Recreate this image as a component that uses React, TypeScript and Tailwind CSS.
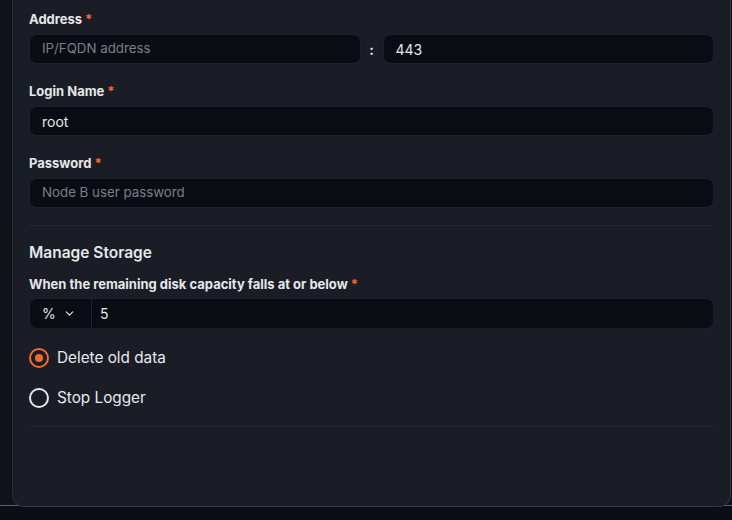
import React, { useState } from "react"
import { ChevronDown } from "lucide-react"

const font = { fontFamily: "Inter, 'Noto Sans', sans-serif" }

function Label({ text, required = true }: { text: string; required?: boolean }) {
    return (
        <div className="text-[13px] leading-[20px] font-bold text-[#e6e7ea]">
            {text}
            {required && <span className="ml-[3px] text-[#f26a2e]">*</span>}
        </div>
    )
}

function Input({ value, placeholder }: { value?: string; placeholder?: string }) {
    return (
        <div className="h-[30px] flex items-center px-3 rounded-lg bg-[#090c13] border border-[#1c2130]">
            {value ? <span className="text-[14px] text-[#e6e7ea]">{value}</span> : <span className="text-[13.3px] text-[#7b7f88]">{placeholder}</span>}
        </div>
    )
}

function Radio({ checked, label, onClick }: { checked: boolean; label: string; onClick: () => void }) {
    return (
        <button onClick={onClick} className="flex items-center gap-2 h-6 text-left">
            <span className={`w-5 h-5 rounded-full border-2 flex items-center justify-center ${checked ? "border-[#f26a2e]" : "border-[#e6e7ea]"}`}>
                {checked && <span className="w-2 h-2 rounded-full bg-[#f26a2e]" />}
            </span>
            <span className="text-[15.3px] text-[#e8e9ec]">{label}</span>
        </button>
    )
}

export default function App() {
    const [mode, setMode] = useState("delete")
    return (
        <div style={font} className="relative w-[732px] h-[520px] bg-[#0b0d12] overflow-hidden">
            <div className="absolute left-0 top-0 w-full h-[506px] bg-[#0f1218]" />
            <div className="absolute left-0 top-[505px] w-full h-px bg-[#5b6070]" />
            <div className="relative z-10 ml-[12px] w-[719px] h-[507px] bg-[#1a1d25] border-l border-r border-b border-l-[#272d45] border-r-[#3d2f3c] border-b-[#2d3550] rounded-b-xl px-4 pt-[9px]">
                <Label text="Address" />
                <div className="mt-[5px] flex items-center">
                    <div className="flex-1"><Input placeholder="IP/FQDN address" /></div>
                    <span className="w-[22px] text-center text-[14px] font-bold text-[#e6e7ea]">:</span>
                    <div className="flex-1"><Input value="443" /></div>
                </div>

                <div className="mt-[17px]"><Label text="Login Name" /></div>
                <div className="mt-[5px]"><Input value="root" /></div>

                <div className="mt-[17px]"><Label text="Password" /></div>
                <div className="mt-[5px]"><Input placeholder="Node B user password" /></div>

                <div className="mt-[17px] h-px bg-[#252a38]" />

                <h3 className="mt-[15px] text-[15.5px] leading-[24px] font-semibold text-[#e6e7ea]">Manage Storage</h3>
                <div className="mt-[9px]"><Label text="When the remaining disk capacity falls at or below" /></div>
                <div className="mt-[4px] h-[31px] flex rounded-lg bg-[#090c13] border border-[#1c2130] text-[14px] text-[#e6e7ea]">
                    <div className="w-[62px] flex items-center pl-3 gap-[7px] border-r border-[#1f2434]">
                        <span>%</span>
                        <ChevronDown size={13} strokeWidth={2} />
                    </div>
                    <div className="flex items-center pl-2">5</div>
                </div>

                <div className="mt-[17px] flex flex-col gap-[16px]">
                    <Radio checked={mode === "delete"} label="Delete old data" onClick={() => setMode("delete")} />
                    <Radio checked={mode === "stop"} label="Stop Logger" onClick={() => setMode("stop")} />
                </div>

                <div className="mt-[16px] h-px bg-[#1f2747]" />
            </div>
        </div>
    )
}
